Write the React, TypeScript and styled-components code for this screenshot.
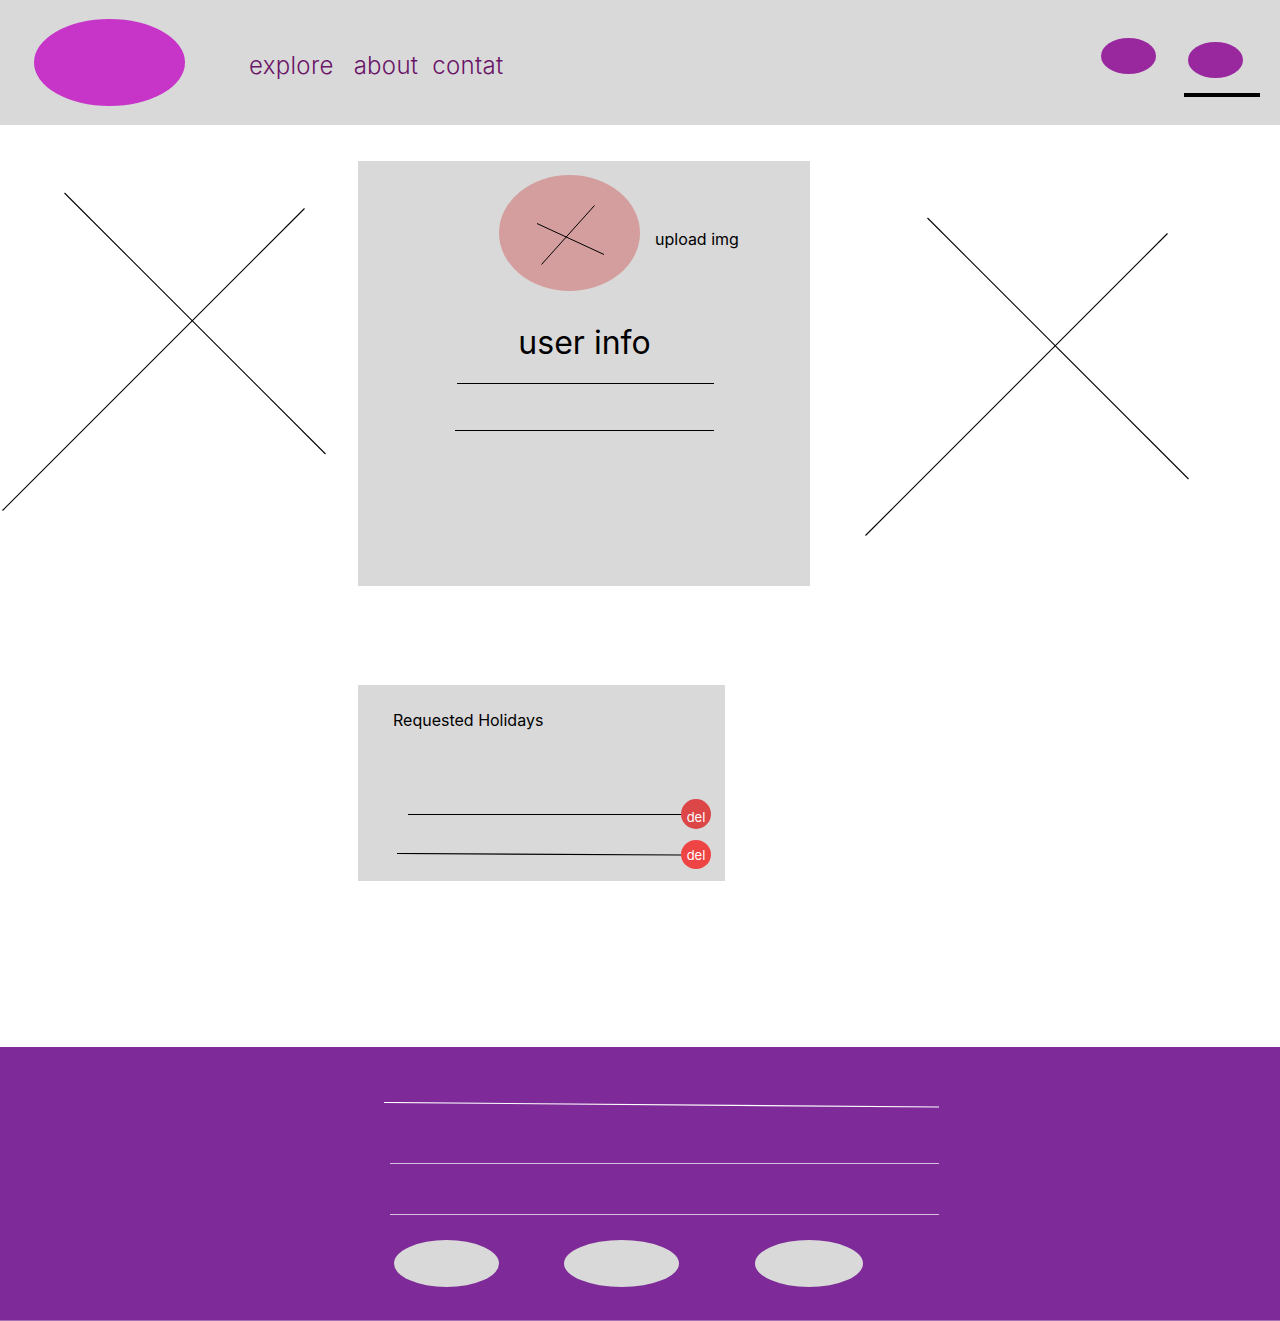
import React from 'react';
import styled, { createGlobalStyle } from 'styled-components';

const GlobalStyle = createGlobalStyle`
    html, body {
        margin: 0;
        padding: 0;
        background: #ffffff;
        font-family: "Inter", "Liberation Sans", sans-serif;
    }
`;

const Page = styled.div`
    width: 1280px;
    height: 1321px;
    display: flex;
    flex-direction: column;
    overflow: hidden;
`;

const Header = styled.header`
    height: 125px;
    flex: none;
    display: flex;
    align-items: flex-start;
    padding: 0 20px 0 34px;
    box-sizing: border-box;
    background: #d9d9d9;
`;

const Logo = styled.div`
    width: 151px;
    height: 87px;
    margin-top: 19px;
    border-radius: 50%;
    background: #c634c8;
`;

const Nav = styled.nav`
    display: flex;
    margin: 51px 0 0 64px;
`;

const NavLink = styled.a<{ $gap: number }>`
    margin-right: ${({ $gap }) => $gap}px;
    font-size: 24px;
    font-weight: 300;
    line-height: 29px;
    letter-spacing: 0.3px;
    color: #6a1568;
`;

const Actions = styled.div`
    margin-left: auto;
    display: flex;
    align-items: flex-start;
    gap: 28px;
`;

const ActionDot = styled.div<{ $top: number; $left?: number }>`
    width: 55px;
    height: 36px;
    margin: ${({ $top }) => $top}px 0 0 ${({ $left }) => $left ?? 0}px;
    border-radius: 50%;
    background: #99279e;
`;

const ActiveAction = styled.div`
    width: 76px;
`;

const ActiveBar = styled.div`
    height: 4px;
    margin-top: 15px;
    background: #000000;
`;

const ProfileRow = styled.section`
    display: flex;
    align-items: flex-start;
    padding-top: 36px;
`;

const Cross = styled.svg<{ $top: number; $left: number }>`
    display: block;
    flex: none;
    margin: ${({ $top }) => $top}px 0 0 ${({ $left }) => $left}px;
`;

const UserCard = styled.div`
    width: 452px;
    height: 425px;
    flex: none;
    margin-left: 32px;
    padding-top: 14px;
    box-sizing: border-box;
    display: flex;
    flex-direction: column;
    background: #d9d9d9;
`;

const AvatarRow = styled.div`
    display: flex;
    align-items: flex-start;
    padding-left: 141px;
`;

const Avatar = styled.div`
    width: 141px;
    height: 116px;
    flex: none;
    border-radius: 50%;
    background: #d49e9e;
    display: flex;
    align-items: center;
    justify-content: center;
`;

const UploadLabel = styled.span`
    margin: 55px 0 0 15px;
    font-size: 16px;
    line-height: 19px;
    color: #000000;
`;

const UserTitle = styled.h1`
    margin: 32px 0 0;
    padding-left: 1px;
    font-size: 32px;
    font-weight: 400;
    line-height: 39px;
    text-align: center;
    color: #000000;
`;

const FieldLine = styled.div<{ $top: number; $left: number; $width: number }>`
    width: ${({ $width }) => $width}px;
    height: 1px;
    margin: ${({ $top }) => $top}px 0 0 ${({ $left }) => $left}px;
    background: #000000;
`;

const HolidayCard = styled.div`
    width: 367px;
    height: 196px;
    flex: none;
    margin: 99px 0 0 358px;
    padding: 26px 14px 0 0;
    box-sizing: border-box;
    background: #d9d9d9;
`;

const HolidayTitle = styled.h2`
    margin: 0 0 69px 35px;
    font-size: 16px;
    font-weight: 400;
    line-height: 19px;
    color: #000000;
`;

const HolidayRow = styled.div<{ $inset: number; $gap?: number }>`
    display: flex;
    align-items: center;
    margin: ${({ $gap }) => $gap ?? 0}px 0 0 ${({ $inset }) => $inset}px;
`;

const HolidayLine = styled.div`
    flex: 1;
    height: 1px;
    background: #000000;
`;

const DelButton = styled.button<{ $color: string; $height: number; $drop: number }>`
    width: 30px;
    height: ${({ $height }) => $height}px;
    flex: none;
    padding: ${({ $drop }) => $drop}px 0 0;
    border: 0;
    border-radius: 50%;
    background: ${({ $color }) => $color};
    color: #ffffff;
    font-family: inherit;
    font-size: 13px;
    line-height: 16px;
`;

const Footer = styled.footer`
    height: 274px;
    flex: none;
    margin-top: 166px;
    padding: 55px 0 0 384px;
    box-sizing: border-box;
    background: #7e2a98;
    border-bottom: 1px solid #a56fb6;
`;

const SlantedLine = styled.svg`
    display: block;
`;

const FooterLine = styled.div<{ $top: number }>`
    width: 549px;
    height: 1px;
    margin: ${({ $top }) => $top}px 0 0 6px;
    background: #d8bfe0;
`;

const SocialRow = styled.div`
    display: flex;
    margin: 25px 0 0 10px;
`;

const SocialDot = styled.div<{ $width: number; $gap?: number }>`
    width: ${({ $width }) => $width}px;
    height: 47px;
    margin-left: ${({ $gap }) => $gap ?? 0}px;
    border-radius: 50%;
    background: #d9d9d9;
`;

const BigCross: React.FC<{ top: number; left: number }> = ({ top, left }) => (
    <Cross $top={top} $left={left} width="326" height="320" viewBox="0 0 326 320" fill="none" stroke="#000000" strokeWidth="1.1">
        <line x1="64.5" y1="1" x2="325.5" y2="262" />
        <line x1="304.5" y1="16.5" x2="2.5" y2="318.5" />
    </Cross>
);

const App: React.FC = () => {
    return (
        <Page>
            <GlobalStyle />
            <Header>
                <Logo />
                <Nav>
                    <NavLink $gap={20}>explore</NavLink>
                    <NavLink $gap={14}>about</NavLink>
                    <NavLink $gap={0}>contat</NavLink>
                </Nav>
                <Actions>
                    <ActionDot $top={38} />
                    <ActiveAction>
                        <ActionDot $top={42} $left={4} />
                        <ActiveBar />
                    </ActiveAction>
                </Actions>
            </Header>

            <ProfileRow>
                <BigCross top={31} left={0} />
                <UserCard>
                    <AvatarRow>
                        <Avatar>
                            <svg width="141" height="116" viewBox="0 0 141 116" fill="none" stroke="#000000">
                                <line x1="38" y1="48.5" x2="105" y2="79.5" />
                                <line x1="95.5" y1="30.5" x2="42.5" y2="89.5" />
                            </svg>
                        </Avatar>
                        <UploadLabel>upload img</UploadLabel>
                    </AvatarRow>
                    <UserTitle>user info</UserTitle>
                    <FieldLine $top={21} $left={99} $width={257} />
                    <FieldLine $top={46} $left={97} $width={259} />
                </UserCard>
                <BigCross top={56} left={53} />
            </ProfileRow>

            <HolidayCard>
                <HolidayTitle>Requested Holidays</HolidayTitle>
                <HolidayRow $inset={50}>
                    <HolidayLine />
                    <DelButton $color="#dc4646" $height={30} $drop={5}>del</DelButton>
                </HolidayRow>
                <HolidayRow $inset={39} $gap={11}>
                    <svg width="284" height="4" viewBox="0 0 284 4" fill="none" stroke="#000000" strokeWidth="1.2">
                        <line x1="0" y1="0.5" x2="284" y2="2" />
                    </svg>
                    <DelButton $color="#ef4444" $height={29} $drop={1}>del</DelButton>
                </HolidayRow>
            </HolidayCard>

            <Footer>
                <SlantedLine width="555" height="6" viewBox="0 0 555 6" fill="none" stroke="#ffffff" strokeWidth="1.2">
                    <line x1="0" y1="0.5" x2="555" y2="5" />
                </SlantedLine>
                <FooterLine $top={55} />
                <FooterLine $top={50} />
                <SocialRow>
                    <SocialDot $width={105} />
                    <SocialDot $width={115} $gap={65} />
                    <SocialDot $width={108} $gap={76} />
                </SocialRow>
            </Footer>
        </Page>
    );
};

export default App;
